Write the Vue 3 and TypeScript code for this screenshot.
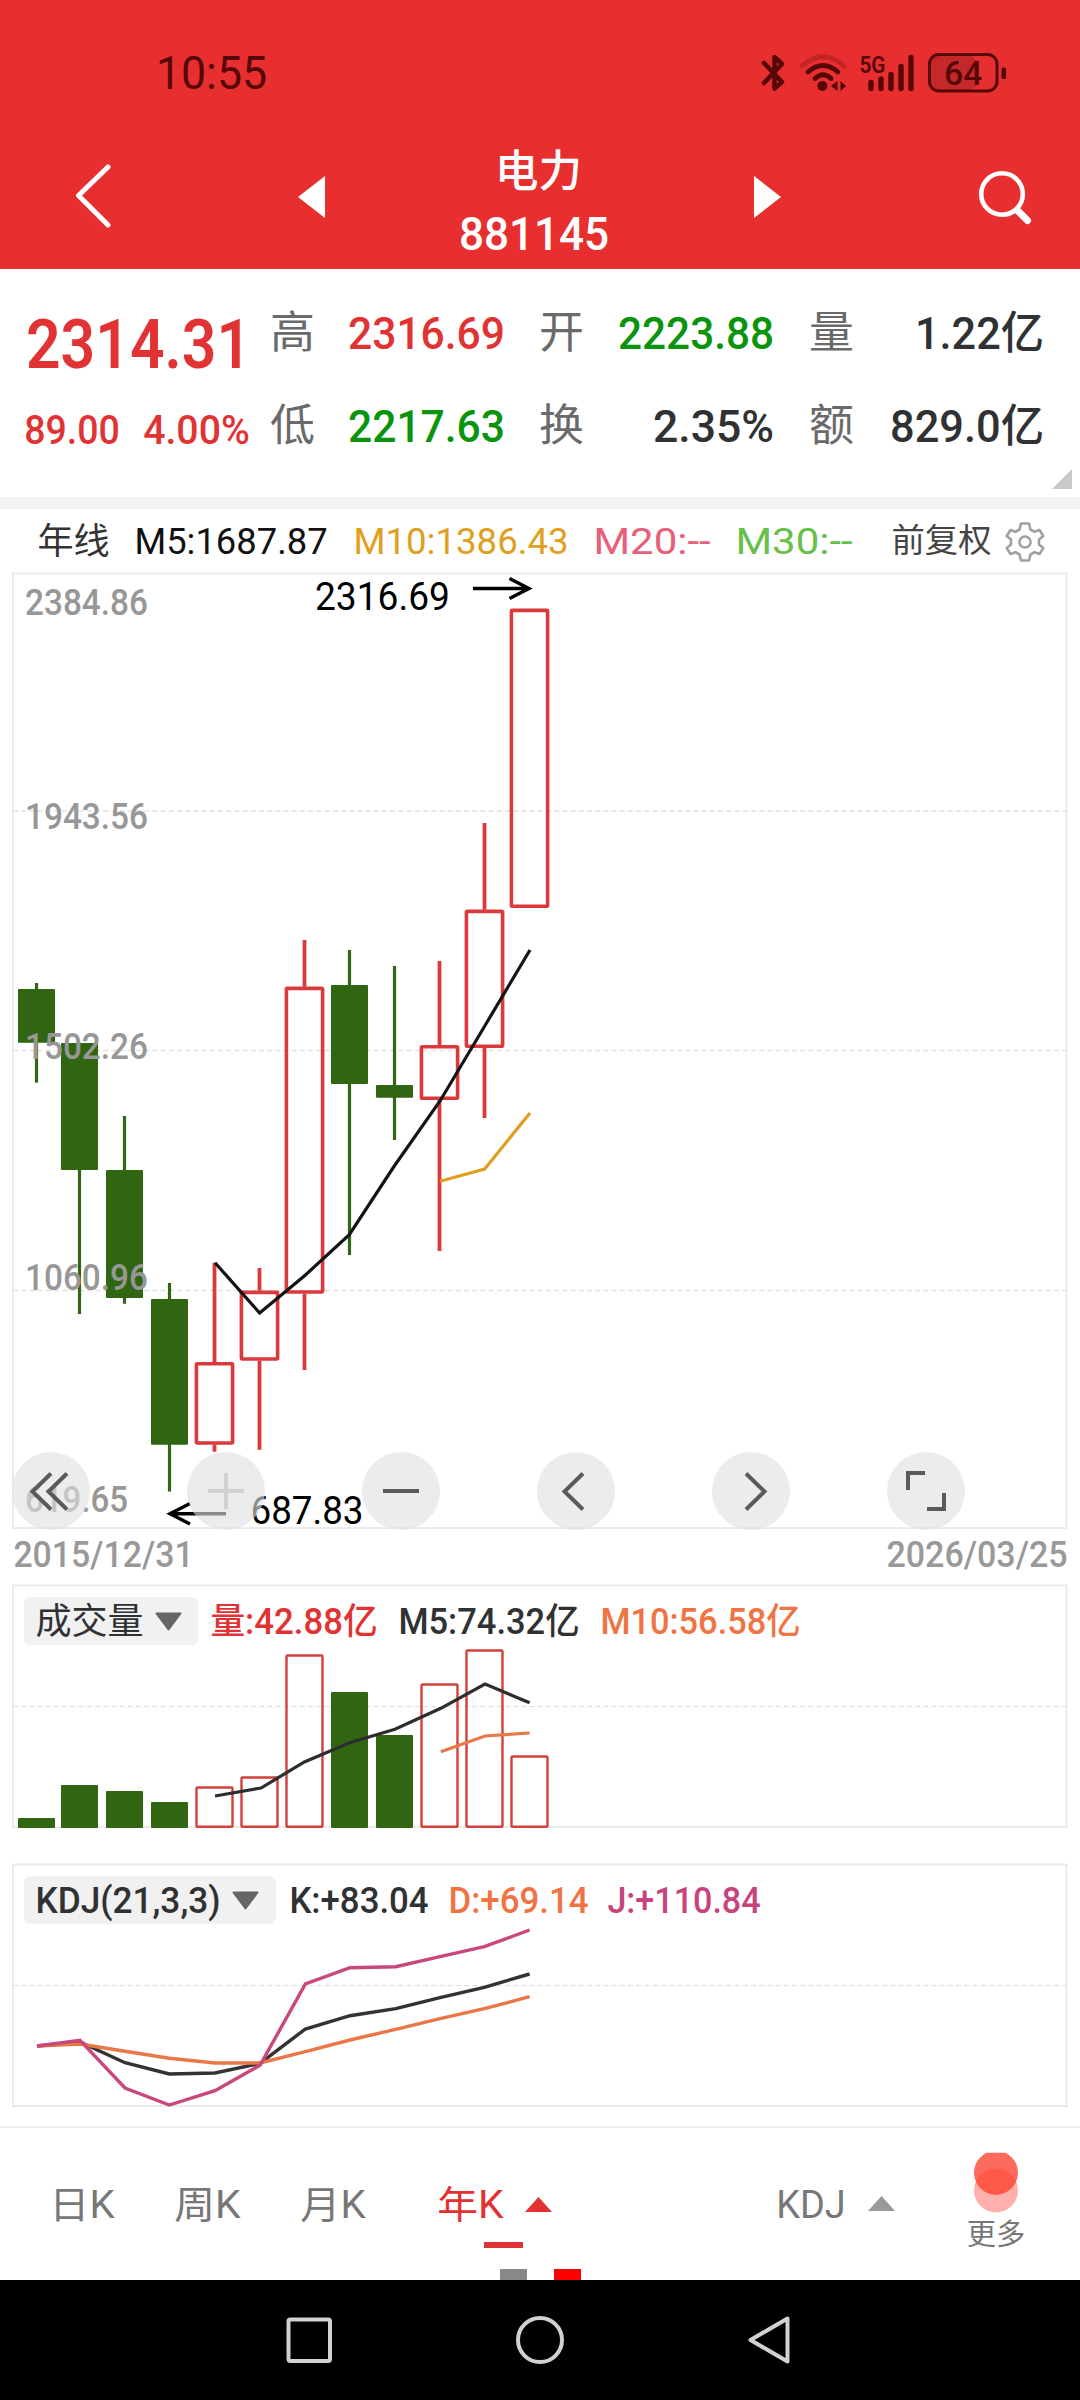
<script setup lang="ts">
import { h } from 'vue'

interface LabelProps {
  t: string
  w: number
  s: number
  b?: number
}

// Single-line label whose glyphs are fitted to an exact width.
const Label = (p: LabelProps) =>
  h(
    'svg',
    { class: 'label', width: p.w, height: p.s, viewBox: `0 0 ${p.w} ${p.s}` },
    h(
      'text',
      {
        x: -p.s * 0.045,
        y: p.s * 0.856,
        'font-size': p.s,
        'font-weight': p.b ?? 400,
        fill: 'currentColor',
        textLength: p.w + p.s * 0.09,
        lengthAdjust: 'spacingAndGlyphs',
      },
      p.t,
    ),
  )
Label.props = ['t', 'w', 's', 'b']

interface Quote {
  name: string
  value: string
  w: number
  tone: 'up' | 'down' | 'flat'
}

const quotes: Quote[][] = [
  [
    { name: '高', value: '2316.69', w: 153, tone: 'up' },
    { name: '低', value: '2217.63', w: 153, tone: 'down' },
  ],
  [
    { name: '开', value: '2223.88', w: 152, tone: 'down' },
    { name: '换', value: '2.35%', w: 117, tone: 'flat' },
  ],
  [
    { name: '量', value: '1.22亿', w: 125, tone: 'flat' },
    { name: '额', value: '829.0亿', w: 150, tone: 'flat' },
  ],
]

// x centre, wick top, body top, body bottom, wick bottom, rising
type Candle = [number, number, number, number, number, boolean]
const candles: Candle[] = [
  [36.5, 983, 989, 1042.7, 1082.7, false],
  [79.5, 1043, 1043, 1170, 1314, false],
  [124.5, 1116, 1170, 1298, 1303.7, false],
  [169.5, 1283, 1299, 1444.7, 1491.5, false],
  [214.5, 1262.7, 1362, 1444.7, 1451.7, true],
  [259.5, 1268, 1290.7, 1360.7, 1449.7, true],
  [304.5, 940, 986.7, 1293.7, 1370, true],
  [349.5, 950, 985, 1084, 1255, false],
  [394.5, 966, 1085, 1097.7, 1140, false],
  [439.5, 961, 1045, 1100, 1251, true],
  [484.5, 823, 909.7, 1048, 1118, true],
  [529.5, 608.7, 608.7, 908, 908, true],
]

const volumeTops = [1818, 1785, 1791, 1802, 1786.3, 1776.3, 1654.3, 1692, 1735, 1683.3, 1649.3, 1755.3]

const axis = [
  { t: '2384.86', y: 615 },
  { t: '1943.56', y: 829 },
  { t: '1502.26', y: 1059 },
  { t: '1060.96', y: 1290 },
  { t: '619.65', y: 1512 },
]

const tools = ['first', 'plus', 'minus', 'prev', 'next', 'full']
</script>

<template>
  <div class="screen">
    <header class="top">
      <div class="status">
        <Label t="10:55" :w="107" :s="46" class="clock" />
        <svg class="ic" width="24" height="40" viewBox="761 53 24 40">
          <path d="M764 63 L782 82 L774.5 88.5 V57 L782 64 L764 83" fill="none" stroke="#580709" stroke-width="4.6" stroke-linecap="round" stroke-linejoin="round" />
        </svg>
        <svg class="ic wifi" width="48" height="40" viewBox="799 53 48 40">
          <g fill="none" stroke="#580709" stroke-width="4.8" stroke-linecap="round">
            <path d="M802 66 Q823 47.5 844 66" opacity=".25" />
            <path d="M808 72 Q823 59 838 72" />
            <path d="M815 78.5 Q823 71 831 78.5" />
          </g>
          <circle cx="822.3" cy="86" r="5" fill="#580709" />
          <path d="M837.500 81 V91 L831 86 Z M840.500 81 L846 86 L840.500 91 Z" fill="#580709" />
        </svg>
        <svg class="ic sig" width="56" height="40" viewBox="860 53 56 40">
          <text x="859.5" y="73" font-size="24" font-weight="600" textLength="26" lengthAdjust="spacingAndGlyphs" fill="#580709">5G</text>
          <path d="M871 82.5 V88.5 M881 79 V88.5 M891 74.500 V88.5 M901 66.500 V88.5 M911 57.500 V88.5" stroke="#580709" stroke-width="5.4" stroke-linecap="round" />
        </svg>
        <svg class="ic bat" width="80" height="40" viewBox="927 53 80 40">
          <rect x="931" y="56" width="45" height="34" rx="6" fill="#c4282a" />
          <rect x="929.5" y="54.500" width="67.500" height="36.500" rx="9.500" fill="none" stroke="#580709" stroke-width="3" />
          <rect x="1001.500" y="67.500" width="4.500" height="11.500" rx="1.500" fill="#580709" />
          <text x="944" y="84.500" font-size="34" font-weight="500" textLength="38.500" lengthAdjust="spacingAndGlyphs" fill="#580709">64</text>
        </svg>
      </div>
      <div class="titlebar">
        <svg class="back" width="40" height="66" viewBox="74 164 40 66">
          <path d="M109 167 L79.500 195.500 L109 225" fill="none" stroke="#fff" stroke-width="5" stroke-linecap="round" stroke-linejoin="round" />
        </svg>
        <svg class="tri-l" width="27" height="42" viewBox="0 0 27 42"><path d="M27 0 V42 L0 21 Z" fill="#fff" /></svg>
        <div class="title">
          <Label t="电力" :w="83" :s="44" :b="500" class="stock" />
          <Label t="881145" :w="146" :s="47" :b="500" />
        </div>
        <svg class="tri-r" width="27" height="42" viewBox="0 0 27 42"><path d="M0 0 V42 L27 21 Z" fill="#fff" /></svg>
        <svg class="search" width="56" height="56" viewBox="977 169 56 56">
          <circle cx="1002" cy="194" r="20.800" fill="none" stroke="#fff" stroke-width="4.600" />
          <path d="M1017.500 210.500 L1027.500 220.500" stroke="#fff" stroke-width="7" stroke-linecap="round" />
        </svg>
      </div>
    </header>

    <section class="quote">
      <div class="price up">
        <div class="big"><Label t="2314.31" :w="219" :s="68" :b="600" /></div>
        <div class="chg">
          <Label t="89.00" :w="92" :s="40" :b="500" />
          <Label t="4.00%" :w="103" :s="40" :b="500" />
        </div>
      </div>
      <div v-for="(col, i) in quotes" :key="i" class="col">
        <div v-for="q in col" :key="q.name" class="cell">
          <Label :t="q.name" :w="41" :s="44" class="name" />
          <Label :t="q.value" :w="q.w" :s="45" :b="500" :class="q.tone" />
        </div>
      </div>
      <svg class="corner" width="20" height="20" viewBox="0 0 20 20"><path d="M20 0 V20 H0 Z" fill="#c9c9c9" /></svg>
    </section>

    <div class="legend">
      <Label t="年线" :w="69" :s="36" class="c-year" />
      <Label t="M5:1687.87" :w="190" :s="36" class="m5" />
      <Label t="M10:1386.43" :w="212" :s="36" class="m10" />
      <Label t="M20:--" :w="114" :s="36" class="m20" />
      <Label t="M30:--" :w="114" :s="36" class="m30" />
      <Label t="前复权" :w="97" :s="33" class="fq" />
      <svg class="gear" width="40" height="42" viewBox="-20 -21 40 42">
        <path d="M-4 -18.500 H4 L5.500 -12.500 L9.500 -10.200 L14.500 -12 L18.300 -6 L14 -2.500 V2.500 L18.300 6 L14.500 12 L9.500 10.200 L5.500 12.500 L4 18.500 H-4 L-5.500 12.500 L-9.500 10.200 L-14.500 12 L-18.300 6 L-14 2.500 V-2.500 L-18.300 -6 L-14.500 -12 L-9.500 -10.200 L-5.500 -12.500 Z" fill="none" stroke="#a0a0a0" stroke-width="2.600" stroke-linejoin="round" />
        <circle r="5.600" fill="none" stroke="#a0a0a0" stroke-width="2.500" />
      </svg>
    </div>

    <section class="kline">
      <svg class="plot" width="1080" height="958" viewBox="0 572 1080 958">
        <rect x="13" y="573.500" width="1053.500" height="954.500" fill="none" stroke="#ebebeb" stroke-width="2" />
        <path d="M13 811 H1066 M13 1050.500 H1066 M13 1290.500 H1066" stroke="#e2e2e2" stroke-width="1.300" stroke-dasharray="5 3.200" />
        <g v-for="(c, i) in candles" :key="i">
          <template v-if="c[5]">
            <path :d="`M${c[0]} ${c[1]} V${c[2]} M${c[0]} ${c[3]} V${c[4]}`" stroke="#da3a3c" stroke-width="3.800" />
            <rect :x="c[0] - 18.100" :y="c[2] + 1.700" width="36.200" :height="c[3] - c[2] - 3.400" rx="1" fill="none" stroke="#da3a3c" stroke-width="3.600" />
          </template>
          <template v-else>
            <path :d="`M${c[0]} ${c[1]} V${c[4]}`" stroke="#336514" stroke-width="3.200" />
            <rect :x="c[0] - 18.500" :y="c[2]" width="37" :height="c[3] - c[2]" rx="1" fill="#306612" />
          </template>
        </g>
        <polyline points="215,1262.700 259.600,1313 304.300,1276 349.300,1234.700 394.300,1166 440,1101 484.300,1026.700 530,950" fill="none" stroke="#141414" stroke-width="3.200" />
        <polyline points="440,1181.300 484.600,1169 530,1113" fill="none" stroke="#dda020" stroke-width="3.200" />
        <g fill="#979797" font-size="36" font-weight="500">
          <text v-for="a in axis" :key="a.t" x="25" :y="a.y" :textLength="a.t.length === 7 ? 123 : 103" lengthAdjust="spacingAndGlyphs">{{ a.t }}</text>
        </g>
        <g font-size="38" fill="#000">
          <text x="315" y="610" textLength="135" lengthAdjust="spacingAndGlyphs">2316.69</text>
          <text x="250.500" y="1524" textLength="113" lengthAdjust="spacingAndGlyphs">687.83</text>
        </g>
        <g fill="none" stroke="#000" stroke-width="3.400">
          <path d="M473 588.500 H529 M509.500 578.500 L529 588.500 L509.500 598.500" />
          <path d="M226 1513.700 H170 M190 1503.500 L170 1513.700 L190 1524" />
        </g>
      </svg>
      <div class="tools">
        <svg v-for="k in tools" :key="k" class="tool" width="78" height="78" viewBox="-39 -39 78 78">
          <circle r="39" fill="rgba(224,224,224,.62)" />
          <g fill="none" stroke="#5a5a5a" stroke-width="4">
            <path v-if="k === 'first'" d="M0 -17.500 L-18.500 0.500 L0 18.500 M16 -17.500 L-2.500 0.500 L16 18.500" />
            <path v-if="k === 'plus'" d="M-18 0 H18 M0 -18 V18" stroke="#d2d2d2" />
            <path v-if="k === 'minus'" d="M-18 0 H18" />
            <path v-if="k === 'prev'" d="M7 -17.500 L-11.500 0.500 L7 18.500" />
            <path v-if="k === 'next'" d="M-5 -17.500 L13.500 0.500 L-5 18.500" />
            <path v-if="k === 'full'" d="M-18 -1 V-18 H-1 M18 2 V18 H1" />
          </g>
        </svg>
      </div>
    </section>

    <div class="dates">
      <Label t="2015/12/31" :w="177" :s="36" :b="500" />
      <Label t="2026/03/25" :w="178" :s="36" :b="500" />
    </div>

    <section class="panel vol">
      <svg class="plot" width="1080" height="246" viewBox="0 1584 1080 246">
        <rect x="13" y="1585.500" width="1053.500" height="241.500" fill="none" stroke="#ebebeb" stroke-width="2" />
        <path d="M13 1706.500 H1066" stroke="#dedede" stroke-width="1.200" stroke-dasharray="5 3.200" />
        <template v-for="(y, i) in volumeTops" :key="i">
          <rect v-if="candles[i][5]" :x="candles[i][0] - 18" :y="y + 1.200" width="36" :height="1826.800 - y - 1.200" rx="1" fill="none" stroke="#d2403c" stroke-width="2.400" />
          <rect v-else :x="candles[i][0] - 18.500" :y="y" width="37" :height="1828 - y" rx="1" fill="#306612" />
        </template>
        <polyline points="215,1796 261,1788 304.400,1762 349.500,1742.700 395,1729.300 440.800,1708.300 485,1684 529.600,1702.700" fill="none" stroke="#2d2d2d" stroke-width="3.200" />
        <polyline points="440.800,1751.700 485,1736 529.600,1733" fill="none" stroke="#ea7747" stroke-width="3.200" />
      </svg>
      <div class="info">
        <div class="pill p1">
          <Label t="成交量" :w="105" :s="36" />
          <svg width="27" height="19" viewBox="0 0 27 19"><path d="M1.500 1.500 H25.500 L13.500 17.500 Z" fill="#666" stroke="#666" stroke-width="2" stroke-linejoin="round" /></svg>
        </div>
        <Label t="量:42.88亿" :w="164" :s="36" :b="500" class="up v1" />
        <Label t="M5:74.32亿" :w="178" :s="36" :b="500" class="dark v2" />
        <Label t="M10:56.58亿" :w="197" :s="36" :b="500" class="orange v3" />
      </div>
    </section>

    <section class="panel kdj">
      <svg class="plot" width="1080" height="246" viewBox="0 1863 1080 246">
        <rect x="13" y="1864.500" width="1053.500" height="241.500" fill="none" stroke="#ebebeb" stroke-width="2" />
        <path d="M13 1985.500 H1066" stroke="#dedede" stroke-width="1.200" stroke-dasharray="5 3.200" />
        <g fill="none" stroke-width="3.400">
          <polyline points="37,2046 80,2042 125,2062.700 169.300,2074 215,2073 260,2063.300 305.400,2029 350,2015.700 395.700,2008.700 440,1997.700 484.300,1987.300 529.600,1974" stroke="#333" />
          <polyline points="37,2046 80,2044 125,2051.300 169.300,2058.300 215,2063 260,2063 305.400,2051.700 350,2040 395.700,2029.300 440,2018.700 484.300,2008.700 529.600,1996.700" stroke="#ea7747" />
          <polyline points="37,2046 80,2040.300 125,2088 169.300,2105 215,2090.700 260,2065.300 305.400,1984 350,1967.700 395.700,1966.700 440,1956.700 484.300,1946.700 529.600,1930" stroke="#c8487e" />
        </g>
      </svg>
      <div class="info">
        <div class="pill p2">
          <Label t="KDJ(21,3,3)" :w="182" :s="36" :b="500" />
          <svg width="27" height="19" viewBox="0 0 27 19"><path d="M1.500 1.500 H25.500 L13.500 17.500 Z" fill="#666" stroke="#666" stroke-width="2" stroke-linejoin="round" /></svg>
        </div>
        <Label t="K:+83.04" :w="136" :s="36" :b="500" class="dark k1" />
        <Label t="D:+69.14" :w="137" :s="36" :b="500" class="orange k2" />
        <Label t="J:+110.84" :w="150" :s="36" :b="500" class="pink k3" />
      </div>
    </section>

    <nav class="tabs">
      <Label t="日K" :w="62" :s="38" />
      <Label t="周K" :w="63" :s="38" class="t2" />
      <Label t="月K" :w="62" :s="38" class="t3" />
      <div class="active">
        <div class="row">
          <Label t="年K" :w="63" :s="38" />
          <svg width="27" height="15" viewBox="0 0 27 15"><path d="M13.500 0 L27 15 H0 Z" fill="#e33030" /></svg>
        </div>
        <i class="bar"></i>
      </div>
      <Label t="KDJ" :w="66" :s="39" class="t5" />
      <svg class="t6" width="27" height="15" viewBox="0 0 27 15"><path d="M13.500 0 L27 15 H0 Z" fill="#999" /></svg>
      <div class="more">
        <svg width="46" height="62" viewBox="973 2152 46 62">
          <defs><clipPath id="cut"><rect x="973" y="2152.700" width="46" height="60" /></clipPath></defs>
          <g clip-path="url(#cut)">
            <circle cx="996" cy="2190.500" r="22" fill="#ffb0ac" />
            <circle cx="996" cy="2172.700" r="22" fill="#fd6a5e" />
            <path d="M975.900 2181.600 A22 22 0 0 1 1016.100 2181.600 A22 22 0 0 1 975.900 2181.600 Z" fill="#fe5849" />
          </g>
        </svg>
        <Label t="更多" :w="56" :s="29" />
      </div>
    </nav>
    <div class="dots"><i></i><i class="on"></i></div>

    <footer class="sys">
      <svg width="504" height="52" viewBox="286 2314 504 52">
        <g fill="none" stroke="#d2d2d2" stroke-width="4" stroke-linejoin="round">
          <rect x="288.500" y="2319.500" width="41.500" height="41.500" rx="2" />
          <circle cx="540" cy="2340" r="22" />
          <path d="M787.500 2318.500 V2361.500 L750.500 2340 Z" />
        </g>
      </svg>
    </footer>
  </div>
</template>

<style>
body {
  background: #fff;
}
svg {
  display: block;
  flex: none;
}
svg.label {
  overflow: visible;
}
svg text {
  font-family: Roboto, 'Noto Sans CJK SC', sans-serif;
}
</style>

<style scoped>
.screen {
  width: 1080px;
  height: 2400px;
  overflow: hidden;
  background: #fff;
  font-family: Roboto, 'Noto Sans CJK SC', sans-serif;
}
.top {
  height: 269px;
  background: #e72f2f;
}
.status {
  height: 125px;
  box-sizing: border-box;
  padding: 21px 0 0 158px;
  display: flex;
  align-items: center;
  color: #580709;
}
.clock { margin-right: 496px; }
.wifi { margin-left: 14px; }
.sig { margin-left: 13px; }
.bat { margin-left: 11px; }
.titlebar {
  height: 144px;
  display: flex;
  align-items: center;
  padding-left: 73px;
}
.tri-l { margin-left: 185px; }
.title {
  width: 146px;
  margin-left: 136px;
  display: flex;
  flex-direction: column;
  align-items: center;
  gap: 17px;
  padding-top: 12px;
  color: #fff;
}
.stock { margin-left: 8px; }
.tri-r { margin-left: 147px; }
.search { margin-left: 196px; }
.up { color: #e13334; }
.down { color: #0a940d; }
.flat, .dark { color: #303133; }
.orange { color: #f07443; }
.pink { color: #c8437c; }
.quote {
  position: relative;
  height: 228px;
  display: flex;
  padding-left: 26px;
  box-sizing: border-box;
}
.price { width: 246px; padding-top: 30px; }
.big { height: 90px; display: flex; align-items: center; padding-left: 3px; }
.chg { height: 81px; display: flex; align-items: center; gap: 27px; }
.col { width: 231px; margin-right: 38.500px; padding-top: 17px; }
.cell { height: 93px; display: flex; align-items: center; justify-content: space-between; }
.name { color: #6a6a6a; margin-top: -2px; }
.corner { position: absolute; right: 8px; bottom: 8px; }
.legend {
  height: 63px;
  border-top: 12px solid #f3f3f3;
  box-sizing: content-box;
  display: flex;
  align-items: center;
  padding-left: 39px;
}
.c-year { color: #333; }
.m5 { margin-left: 28px; color: #111; }
.m10 { margin-left: 29px; color: #dfa01d; }
.m20 { margin-left: 28px; color: #e75f78; }
.m30 { margin-left: 28px; color: #68bf49; }
.fq { margin-left: 42px; color: #444; }
.gear { margin-left: 15px; margin-top: 2px; }
.kline { position: relative; height: 958px; }
.tools {
  position: absolute;
  left: 12px;
  top: 879.500px;
  display: flex;
  gap: 97px;
}
.dates {
  height: 54px;
  box-sizing: border-box;
  padding: 0 14px 6px 15px;
  display: flex;
  align-items: center;
  justify-content: space-between;
  color: #999;
}
.panel { position: relative; height: 246px; }
.kdj { margin-top: 33px; }
.info {
  position: absolute;
  left: 24px;
  top: 13px;
  height: 48px;
  display: flex;
  align-items: center;
}
.pill {
  height: 48px;
  box-sizing: border-box;
  border-radius: 6px;
  background: #f1f1f1;
  color: #303133;
  display: flex;
  align-items: center;
  padding-left: 13px;
  gap: 13px;
}
.p1 { width: 174px; }
.p2 { width: 252px; }
.v1 { margin-left: 14px; }
.v2 { margin-left: 24px; }
.v3 { margin-left: 24px; }
.k1 { margin-left: 15px; }
.k2 { margin-left: 23px; }
.k3 { margin-left: 22px; }
.tabs {
  height: 143px;
  margin-top: 17px;
  border-top: 2px solid #ededed;
  box-sizing: border-box;
  display: flex;
  align-items: flex-start;
  padding-left: 51px;
  color: #777;
}
.tabs > .label, .active { margin-top: 57px; }
.tabs > .t2 { margin-left: 63px; }
.tabs > .t3 { margin-left: 63px; }
.active { margin-left: 75px; width: 113px; color: #e33030; }
.row { display: flex; align-items: center; justify-content: space-between; }
.bar { display: block; width: 39px; height: 6px; margin: 19px 0 0 45px; background: #e03434; }
.tabs > .t5 { margin-left: 226px; }
.t6 { margin: 68px 0 0 24px; }
.more {
  margin: 24px 0 0 73px;
  display: flex;
  flex-direction: column;
  align-items: center;
  gap: 6px;
}
.dots {
  height: 11px;
  display: flex;
  justify-content: center;
  gap: 27px;
}
.dots i { width: 27px; background: #888; }
.dots .on { background: #fe0000; }
.sys {
  height: 120px;
  box-sizing: border-box;
  padding-right: 4px;
  background: #000;
  display: flex;
  align-items: center;
  justify-content: center;
}
</style>
